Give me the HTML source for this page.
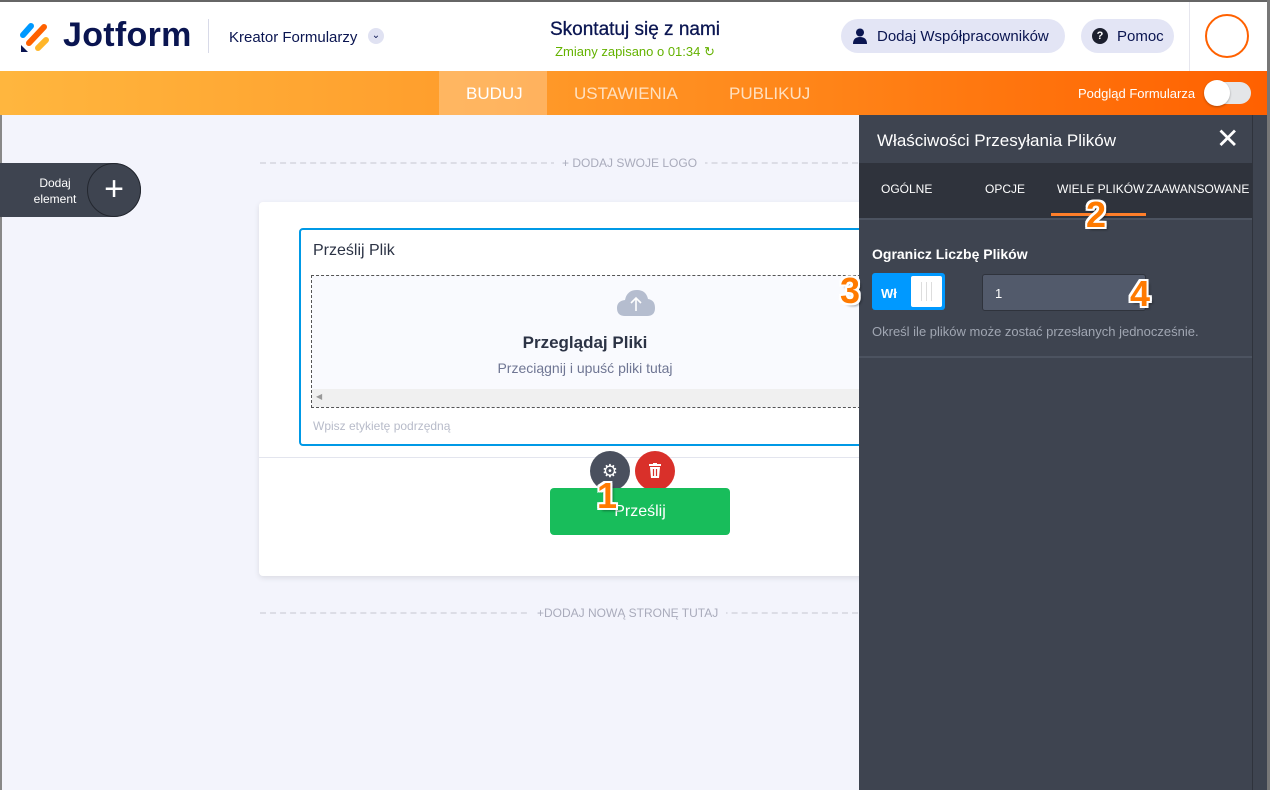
<!DOCTYPE html>
<html><head><meta charset="utf-8"><style>
*{margin:0;padding:0;box-sizing:border-box}
body{width:1270px;height:790px;overflow:hidden;font-family:"Liberation Sans",sans-serif;background:#f3f4fc;position:relative}
.abs{position:absolute}
.num{position:absolute;font:bold 36px "Liberation Sans",sans-serif;color:#ff7a00;text-shadow:2px 0 #fff,-2px 0 #fff,0 2px #fff,0 -2px #fff,2px 2px #fff,-2px -2px #fff,2px -2px #fff,-2px 2px #fff,3px 3px 2px rgba(0,0,0,.35)}
.dash{position:absolute;left:260px;width:598px;border-top:2px dashed #dcdde6}
.dlab{position:absolute;background:#f3f4fc;color:#a9abbb;font-size:12px;padding:0 8px}
</style></head><body>
<div class="abs" style="left:0;top:0;width:1270px;height:2px;background:#666"></div>
<div class="abs" style="left:0;top:2px;width:1270px;height:69px;background:#fff"></div>
<svg class="abs" style="left:18px;top:20px" width="34" height="34" viewBox="0 0 34 34">
<line x1="5" y1="15" x2="13" y2="6" stroke="#0099ff" stroke-width="6" stroke-linecap="round"/>
<line x1="11" y1="23" x2="26" y2="7" stroke="#ff6100" stroke-width="6" stroke-linecap="round"/>
<line x1="20" y1="28" x2="28" y2="20" stroke="#ffb629" stroke-width="6" stroke-linecap="round"/>
<path d="M3 25 L3 32 L10 32 Z" fill="#0a1551"/>
</svg>
<div class="abs" style="left:63px;top:16px;font-size:34px;font-weight:bold;color:#0a1551;letter-spacing:0.3px">Jotform</div>
<div class="abs" style="left:208px;top:19px;width:1px;height:34px;background:#d8dae8"></div>
<div class="abs" style="left:229px;top:29px;font-size:15px;color:#0a1551">Kreator Formularzy</div>
<div class="abs" style="left:368px;top:28px;width:16px;height:16px;border-radius:50%;background:#e0e2f2;color:#0a1551;font-size:10px;text-align:center;line-height:16px">⌄</div>
<div class="abs" style="left:0;top:19px;width:1270px;text-align:center;font-size:19px;color:#0a1551;-webkit-text-stroke:0.3px #0a1551">Skontatuj się z nami</div>
<div class="abs" style="left:0;top:44px;width:1270px;text-align:center;font-size:13px;color:#64b200">Zmiany zapisano o 01:34 ↻</div>
<div class="abs" style="left:841px;top:19px;width:224px;height:34px;border-radius:17px;background:#e3e5f5"></div>
<svg class="abs" style="left:853px;top:28px" width="14" height="16" viewBox="0 0 14 16"><circle cx="7" cy="4.5" r="4" fill="#0a1551"/><path d="M0 16 Q0 9 7 9 Q14 9 14 16Z" fill="#0a1551"/></svg>
<div class="abs" style="left:877px;top:28px;font-size:15px;color:#0a1551">Dodaj Współpracowników</div>
<div class="abs" style="left:1081px;top:19px;width:93px;height:34px;border-radius:17px;background:#e3e5f5"></div>
<div class="abs" style="left:1092px;top:28px;width:16px;height:16px;border-radius:50%;background:#1b1f2e;color:#fff;font-size:11px;font-weight:bold;text-align:center;line-height:16px">?</div>
<div class="abs" style="left:1117px;top:28px;font-size:15px;color:#0a1551">Pomoc</div>
<div class="abs" style="left:1189px;top:2px;width:1px;height:69px;background:#e6e6ee"></div>
<div class="abs" style="left:1205px;top:14px;width:44px;height:44px;border-radius:50%;border:2px solid #ff6100"></div>
<div class="abs" style="left:0;top:71px;width:1270px;height:44px;background:linear-gradient(90deg,#ffb63e,#ff9b2a 40%,#ff8418 65%,#ff6000)"></div>
<div class="abs" style="left:439px;top:71px;width:108px;height:44px;background:rgba(255,255,255,.25)"></div>
<div class="abs" style="left:466px;top:84px;font-size:17px;color:#fff">BUDUJ</div>
<div class="abs" style="left:574px;top:84px;font-size:17px;color:#ffe0c0">USTAWIENIA</div>
<div class="abs" style="left:729px;top:84px;font-size:17px;color:#ffe0c0">PUBLIKUJ</div>
<div class="abs" style="left:1078px;top:86px;font-size:13px;color:#fff">Podgląd Formularza</div>
<div class="abs" style="left:1205px;top:82px;width:46px;height:22px;border-radius:11px;background:#e4e6e8"></div>
<div class="abs" style="left:1204px;top:80px;width:26px;height:26px;border-radius:50%;background:#fff;box-shadow:0 1px 2px rgba(0,0,0,.3)"></div>
<div class="abs" style="left:0;top:115px;width:2px;height:675px;background:#888"></div>
<div class="abs" style="left:0;top:163px;width:141px;height:54px;border-radius:0 27px 27px 0;background:#3e4450"></div>
<div class="abs" style="left:87px;top:163px;width:54px;height:54px;border-radius:50%;border:1px solid #23272f;color:#fff;font-size:34px;text-align:center;line-height:50px;font-weight:300">+</div>
<div class="abs" style="left:20px;top:175px;width:70px;text-align:center;color:#fff;font-size:12px;line-height:16px">Dodaj<br>element</div>
<div class="dash" style="top:162px"></div>
<div class="dlab" style="left:554px;top:156px">+ DODAJ SWOJE LOGO</div>
<div class="dash" style="top:612px"></div>
<div class="dlab" style="left:529px;top:606px">+DODAJ NOWĄ STRONĘ TUTAJ</div>
<div class="abs" style="left:259px;top:202px;width:620px;height:374px;background:#fff;border-radius:4px;box-shadow:0 2px 6px rgba(0,0,0,.1)"></div>
<div class="abs" style="left:299px;top:228px;width:580px;height:218px;border:2px solid #0099e6;border-radius:4px"></div>
<div class="abs" style="left:313px;top:242px;font-size:16px;color:#2c3345">Prześlij Plik</div>
<div class="abs" style="left:311px;top:275px;width:570px;height:133px;border:1px dashed #555;background:#f9fafe"></div>
<div class="abs" style="left:312px;top:389px;width:548px;height:18px;background:#f0f0f0"></div>
<div class="abs" style="left:316px;top:392px;font-size:8px;color:#999">◀</div>
<svg class="abs" style="left:616px;top:289px" width="40" height="28" viewBox="0 0 40 28"><path d="M9 27 Q1 27 1 19 Q1 12 9 11 Q11 1 21 1 Q30 1 32 10 Q39 11 39 19 Q39 27 31 27Z" fill="#b5bdcf"/><path d="M20 22 V9 M15 14 L20 9 L25 14" stroke="#fff" stroke-width="1.6" fill="none"/></svg>
<div class="abs" style="left:311px;top:333px;width:548px;text-align:center;font-size:17px;font-weight:bold;color:#2c3345">Przeglądaj Pliki</div>
<div class="abs" style="left:311px;top:360px;width:548px;text-align:center;font-size:14px;color:#6f7693">Przeciągnij i upuść pliki tutaj</div>
<div class="abs" style="left:313px;top:419px;font-size:12px;color:#b7bbc9">Wpisz etykietę podrzędną</div>
<div class="abs" style="left:259px;top:457px;width:600px;height:1px;background:#e3e5ee"></div>
<div class="abs" style="left:590px;top:451px;width:40px;height:40px;border-radius:50%;background:#4a505e;color:#fff;font-size:18px;text-align:center;line-height:40px">⚙</div>
<div class="abs" style="left:635px;top:451px;width:40px;height:40px;border-radius:50%;background:#d9302a"></div>
<svg class="abs" style="left:649px;top:463px" width="12" height="15" viewBox="0 0 12 15"><rect x="0" y="1" width="12" height="2" fill="#fff"/><rect x="4" y="0" width="4" height="2" fill="#fff"/><path d="M1 4 H11 L10 15 H2Z" fill="#fff"/><path d="M4.5 6 V13 M7.5 6 V13" stroke="#d9302a" stroke-width="1.2"/></svg>
<div class="abs" style="left:550px;top:488px;width:180px;height:47px;border-radius:4px;background:#18bd5b;color:#fff;font-size:16px;text-align:center;line-height:47px">Prześlij</div>
<div class="abs" style="left:859px;top:115px;width:411px;height:675px;background:#3e4450"></div>
<div class="abs" style="left:877px;top:131px;font-size:17px;color:#fff">Właściwości Przesyłania Plików</div>
<div class="abs" style="left:1216px;top:122px;font-size:28px;color:#fff;font-weight:300">✕</div>
<div class="abs" style="left:859px;top:163px;width:393px;height:55px;background:#2f333c"></div>
<div class="abs" style="left:881px;top:182px;font-size:12px;color:#fff">OGÓLNE</div>
<div class="abs" style="left:985px;top:182px;font-size:12px;color:#fff">OPCJE</div>
<div class="abs" style="left:1057px;top:182px;font-size:12px;color:#fff">WIELE PLIKÓW</div>
<div class="abs" style="left:1146px;top:182px;font-size:12px;color:#fff">ZAAWANSOWANE</div>
<div class="abs" style="left:1051px;top:213px;width:95px;height:3px;background:#ff7f2a"></div>
<div class="abs" style="left:859px;top:218px;width:393px;height:2px;background:#4c5360"></div>
<div class="abs" style="left:872px;top:246px;font-size:14px;font-weight:bold;color:#fff">Ogranicz Liczbę Plików</div>
<div class="abs" style="left:872px;top:273px;width:73px;height:37px;border-radius:3px;background:#0099ff"></div>
<div class="abs" style="left:881px;top:286px;font-size:13px;font-weight:bold;color:#fff">Wł</div>
<div class="abs" style="left:911px;top:276px;width:31px;height:31px;border-radius:2px;background:#fff"></div>
<div class="abs" style="left:921px;top:282px;width:11px;height:19px;border-left:1px solid #ddd;border-right:1px solid #ddd"></div>
<div class="abs" style="left:926px;top:282px;width:1px;height:19px;background:#ddd"></div>
<div class="abs" style="left:982px;top:274px;width:164px;height:37px;border-radius:3px;background:#525a6b;border:1px solid #2f333c"></div>
<div class="abs" style="left:995px;top:286px;font-size:13px;color:#fff">1</div>
<div class="abs" style="left:872px;top:324px;font-size:13px;color:#a0a6b2">Określ ile plików może zostać przesłanych jednocześnie.</div>
<div class="abs" style="left:859px;top:356px;width:393px;height:2px;background:#4c5360"></div>
<div class="abs" style="left:1252px;top:115px;width:1px;height:675px;background:#2f333c"></div>
<div class="abs" style="left:1267px;top:0;width:3px;height:790px;background:#777"></div>
<div class="num" style="left:597px;top:475px">1</div>
<div class="num" style="left:1086px;top:194px">2</div>
<div class="num" style="left:840px;top:270px">3</div>
<div class="num" style="left:1130px;top:273px">4</div>
</body></html>
